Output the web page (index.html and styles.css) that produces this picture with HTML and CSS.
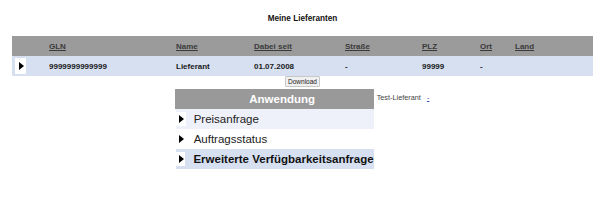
FILE: index.html
```
<!DOCTYPE html>
<html>
<head lang="de">
	<meta charset="UTF-8">
	<title>Meine Lieferanten</title>
	<link rel="stylesheet" href="styles.css">
</head>
<body>
	<h1 class="title">Meine Lieferanten</h1>

	<!-- supplier list -->
	<table class="suppliers">
		<colgroup>
			<col class="c-arrow">
			<col class="c-gln">
			<col class="c-name">
			<col class="c-since">
			<col class="c-street">
			<col class="c-plz">
			<col class="c-ort">
			<col>
		</colgroup>
		<tr class="head">
			<th></th>
			<th><a href="#">GLN</a></th>
			<th><a href="#">Name</a></th>
			<th><a href="#">Dabei seit</a></th>
			<th><a href="#">Straße</a></th>
			<th><a href="#">PLZ</a></th>
			<th><a href="#">Ort</a></th>
			<th><a href="#">Land</a></th>
		</tr>
		<tr class="row">
			<td><span class="arrow"></span></td>
			<td>9999999999999</td>
			<td>Lieferant</td>
			<td>01.07.2008</td>
			<td>-</td>
			<td>99999</td>
			<td>-</td>
			<td></td>
		</tr>
	</table>

	<div class="download"><button class="dlBtn">Download</button></div>

	<div class="lower">
		<div class="menu">
			<div class="menuHead">Anwendung</div>
			<div class="menuItem light"><span class="arrow"></span>Preisanfrage</div>
			<div class="menuItem"><span class="arrow"></span>Auftragsstatus</div>
			<div class="menuItem active"><span class="arrow"></span>Erweiterte Verfügbarkeitsanfrage</div>
		</div>
		<div class="info">Test-Lieferant <a href="#">-</a></div>
	</div>
</body>
</html>
```

FILE: styles.css
```
body {
	margin: 0;
	padding: 0 12px;
	background: #FFFFFF;
	font-family: "Liberation Sans", Arial, sans-serif;
	color: #111111;
}
.title {
	margin: 0;
	padding-top: 14px;
	height: 22px;
	font-size: 8.2px;
	font-weight: bold;
	text-align: center;
}
.suppliers {
	width: 100%;
	border-collapse: collapse;
	table-layout: fixed;
	font-size: 8px;
	font-weight: bold;
}
.c-arrow { width: 37px; }
.c-gln { width: 127px; }
.c-name { width: 78px; }
.c-since { width: 91px; }
.c-street { width: 77px; }
.c-plz { width: 58px; }
.c-ort { width: 35px; }

.suppliers th,
.suppliers td {
	padding: 0;
	height: 20px;
	text-align: left;
	vertical-align: middle;
}
.head {
	background: #9b9b9b;
}
.head a {
	color: #3a3a3a;
	text-decoration: underline;
}
.row {
	background: #d6e0f1;
	color: #1a1a1a;
}
.row td:first-child {
	padding-left: 3px;
}
.row .arrow {
	height: 16px;
}

.arrow {
	display: inline-block;
	width: 11px;
	height: 14px;
	background: #FFFFFF;
	position: relative;
	vertical-align: middle;
}
.arrow:after {
	content: "";
	position: absolute;
	left: 4px;
	top: 50%;
	margin-top: -4px;
	border-style: solid;
	border-width: 4px 0 4px 5px;
	border-color: transparent transparent transparent #000000;
}

.download {
	text-align: center;
	height: 13px;
}
.dlBtn {
	font-family: "Liberation Sans", Arial, sans-serif;
	font-size: 6.5px;
	height: 11px;
	padding: 0 2px;
	margin: 0;
	color: #222222;
	background: #f0f0f0;
	border: 1px solid #c8c8c8;
	border-radius: 1px;
	vertical-align: top;
}

.lower {
	display: flex;
	justify-content: center;
	align-items: flex-start;
	padding-right: 1px;
}
.menu {
	width: 199px;
}
.menuHead {
	height: 20px;
	line-height: 20px;
	background: #999999;
	color: #FFFFFF;
	font-size: 11.5px;
	font-weight: bold;
	text-align: center;
	padding-left: 16px;
}
.menuItem {
	height: 20px;
	display: flex;
	align-items: center;
	margin-left: 1px;
	font-size: 11.5px;
	color: #222222;
	white-space: nowrap;
}
.menuItem .arrow {
	width: 10px;
	margin-right: 8px;
}
.menuItem .arrow:after {
	left: 3px;
}
.light {
	background: #eef1fa;
}
.active {
	background: #d6e0f1;
	font-weight: bold;
	color: #111111;
}
.info {
	margin-left: 3px;
	padding-top: 4px;
	font-size: 7.3px;
	color: #444444;
}
.info a {
	margin-left: 4px;
	color: #3355aa;
}
```
